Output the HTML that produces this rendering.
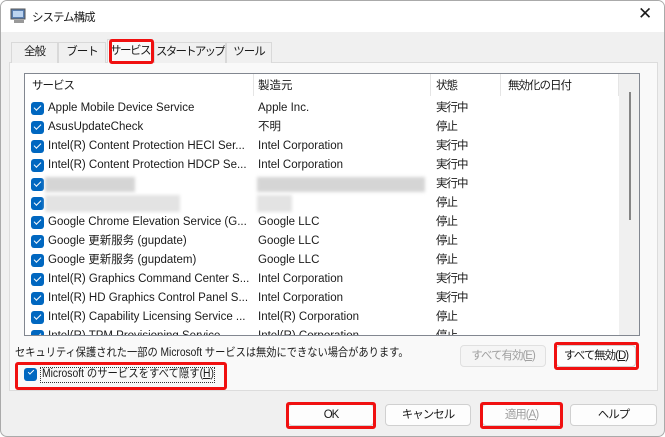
<!DOCTYPE html>
<html><head><meta charset="utf-8"><style>
*{box-sizing:border-box;margin:0;padding:0}
body{width:665px;height:437px;overflow:hidden;background:#fff;font-family:"Liberation Sans","Noto Sans CJK JP",sans-serif;font-size:11.5px;color:#1a1a1a;position:relative}
.win{position:absolute;left:0;top:0;width:665px;height:437px;border:1px solid #aaa;border-radius:7px;background:#f0f0f0;overflow:hidden}
.title{position:absolute;left:0;top:0;width:665px;height:31px;background:#fff}
.abs{position:absolute;white-space:nowrap}
.sx{display:inline-block;transform-origin:0 50%;white-space:nowrap}
.tab{position:absolute;top:41px;height:21px;border:1px solid #d9d9d9;border-bottom:none;background:#f0f0f0;text-align:center;line-height:19px;white-space:nowrap;overflow:hidden;letter-spacing:-1px}
.panel{position:absolute;left:8px;top:61px;width:649px;height:329px;background:#f9f9f9;border:1px solid #dcdcdc}
.list{position:absolute;left:23px;top:72px;width:616px;height:263px;background:#fff;border:1px solid #828790;overflow:hidden}
.row{position:absolute;left:0;height:19px;width:600px;line-height:19px;white-space:nowrap}
.cb{position:absolute;left:6px;top:3px;width:13px;height:13px;border-radius:3px;background:#0067c0}
.cb:after{content:"";position:absolute;left:3px;top:3px;width:6px;height:3px;border-left:1.3px solid #fff;border-bottom:1.3px solid #fff;transform:rotate(-45deg)}
.c1{position:absolute;left:23px}.c2{position:absolute;left:233px}.c3{position:absolute;left:411px;letter-spacing:-1px}
.sep{position:absolute;top:0;width:1px;height:22px;background:#e5e5e5}
.btn{position:absolute;height:22px;border:1px solid #d0d0d0;border-radius:4px;background:#fdfdfd;text-align:center;line-height:20px;white-space:nowrap;letter-spacing:-1px}
.red{position:absolute;border:3px solid #f01010;border-radius:3px}
.blur{position:absolute;background:#d5d5d5;filter:blur(1.5px)}
</style></head><body>
<div class="win">
<div class="title"></div>
<svg class="abs" style="left:9px;top:7px" width="17" height="16" viewBox="0 0 17 16"><rect x="1" y="1" width="14" height="10" fill="#5a7fb0" stroke="#555"/><rect x="3" y="3" width="10" height="6" fill="#bcd4f0"/><rect x="4" y="12" width="10" height="3" fill="#999"/></svg>
<div class="abs" style="left:31px;top:8px;letter-spacing:-1px">システム構成</div>
<div class="abs" style="left:637px;top:3px;font-size:17px;font-weight:300">✕</div>
<div class="panel"></div>
<div class="tab" style="left:10px;width:47px">全般</div>
<div class="tab" style="left:57px;width:48px">ブート</div>
<div class="tab" style="left:106px;top:38px;height:24px;width:46px;background:#f9f9f9;line-height:22px;letter-spacing:-1.5px">サービス</div>
<div class="tab" style="left:153px;width:72px;letter-spacing:-1.8px">スタートアップ</div>
<div class="tab" style="left:225px;width:46px">ツール</div>
<div class="red" style="left:108px;top:38px;width:45px;height:25px"></div>
<div class="list">
 <div class="row" style="top:3px"><span style="position:absolute;left:7px;letter-spacing:-1px">サービス</span><span class="c2">製造元</span><span class="c3">状態</span><span style="position:absolute;left:483px;letter-spacing:-1px">無効化の日付</span></div>
 <div class="sep" style="left:228px"></div><div class="sep" style="left:405px"></div><div class="sep" style="left:475px"></div><div class="sep" style="left:593px"></div>
 <div style="position:absolute;left:594px;top:0;width:21px;height:263px;background:#f0f0f0"></div>
 <div style="position:absolute;left:604px;top:18px;width:2px;height:128px;background:#858585"></div>
 <div class="row" style="top:25px"><i class="cb"></i><span class="c1">Apple Mobile Device Service</span><span class="c2">Apple Inc.</span><span class="c3">実行中</span></div>
 <div class="row" style="top:44px"><i class="cb"></i><span class="c1">AsusUpdateCheck</span><span class="c2">不明</span><span class="c3">停止</span></div>
 <div class="row" style="top:63px"><i class="cb"></i><span class="c1">Intel(R) Content Protection HECI Ser...</span><span class="c2">Intel Corporation</span><span class="c3">実行中</span></div>
 <div class="row" style="top:82px"><i class="cb"></i><span class="c1">Intel(R) Content Protection HDCP Se...</span><span class="c2">Intel Corporation</span><span class="c3">実行中</span></div>
 <div class="row" style="top:101px"><i class="cb"></i><div class="blur" style="left:20px;top:2px;width:90px;height:15px"></div><div class="blur" style="left:232px;top:2px;width:168px;height:15px"></div><span class="c3">実行中</span></div>
 <div class="row" style="top:120px"><i class="cb"></i><div class="blur" style="left:20px;top:1px;width:135px;height:17px;background:#e3e3e3"></div><div class="blur" style="left:232px;top:1px;width:35px;height:17px;background:#e3e3e3"></div><span class="c3">停止</span></div>
 <div class="row" style="top:139px"><i class="cb"></i><span class="c1">Google Chrome Elevation Service (G...</span><span class="c2">Google LLC</span><span class="c3">停止</span></div>
 <div class="row" style="top:158px"><i class="cb"></i><span class="c1">Google 更新服务 (gupdate)</span><span class="c2">Google LLC</span><span class="c3">停止</span></div>
 <div class="row" style="top:177px"><i class="cb"></i><span class="c1">Google 更新服务 (gupdatem)</span><span class="c2">Google LLC</span><span class="c3">停止</span></div>
 <div class="row" style="top:196px"><i class="cb"></i><span class="c1">Intel(R) Graphics Command Center S...</span><span class="c2">Intel Corporation</span><span class="c3">実行中</span></div>
 <div class="row" style="top:215px"><i class="cb"></i><span class="c1">Intel(R) HD Graphics Control Panel S...</span><span class="c2">Intel Corporation</span><span class="c3">実行中</span></div>
 <div class="row" style="top:234px"><i class="cb"></i><span class="c1">Intel(R) Capability Licensing Service ...</span><span class="c2">Intel(R) Corporation</span><span class="c3">停止</span></div>
 <div class="row" style="top:253px"><i class="cb"></i><span class="c1">Intel(R) TPM Provisioning Service</span><span class="c2">Intel(R) Corporation</span><span class="c3">停止</span></div>
</div>
<div class="abs" style="left:14px;top:343px"><span class="sx" style="transform:scaleX(0.89)">セキュリティ保護された一部の Microsoft サービスは無効にできない場合があります。</span></div>
<div class="btn" style="left:459px;top:344px;width:86px;color:#a0a0a0;background:#f5f5f5;border-color:#e0e0e0">すべて有効(<u>E</u>)</div>
<div class="btn" style="left:555px;top:344px;width:80px">すべて無効(<u>D</u>)</div>
<div class="red" style="left:553px;top:341px;width:85px;height:28px"></div>
<div class="abs" style="left:23px;top:367px;width:13px;height:13px;border-radius:3px;background:#0067c0"></div>
<div class="abs" style="left:27px;top:369px;width:6px;height:3px;border-left:1.3px solid #fff;border-bottom:1.3px solid #fff;transform:rotate(-45deg)"></div>
<div class="abs" style="left:39px;top:366px;width:175px;height:16px;border:1px dotted #333"></div>
<div class="abs" style="left:41px;top:366px;line-height:15px"><span class="sx" style="transform:scaleX(0.9)">Microsoft のサービスをすべて隠す(<u>H</u>)</span></div>
<div class="red" style="left:14px;top:361px;width:212px;height:28px"></div>
<div class="btn" style="left:287px;top:403px;width:86px">OK</div>
<div class="red" style="left:285px;top:401px;width:90px;height:27px"></div>
<div class="btn" style="left:384px;top:403px;width:86px">キャンセル</div>
<div class="btn" style="left:481px;top:403px;width:79px;color:#a0a0a0">適用(<u>A</u>)</div>
<div class="red" style="left:479px;top:401px;width:83px;height:27px"></div>
<div class="btn" style="left:569px;top:403px;width:87px">ヘルプ</div>
</div>
</body></html>
